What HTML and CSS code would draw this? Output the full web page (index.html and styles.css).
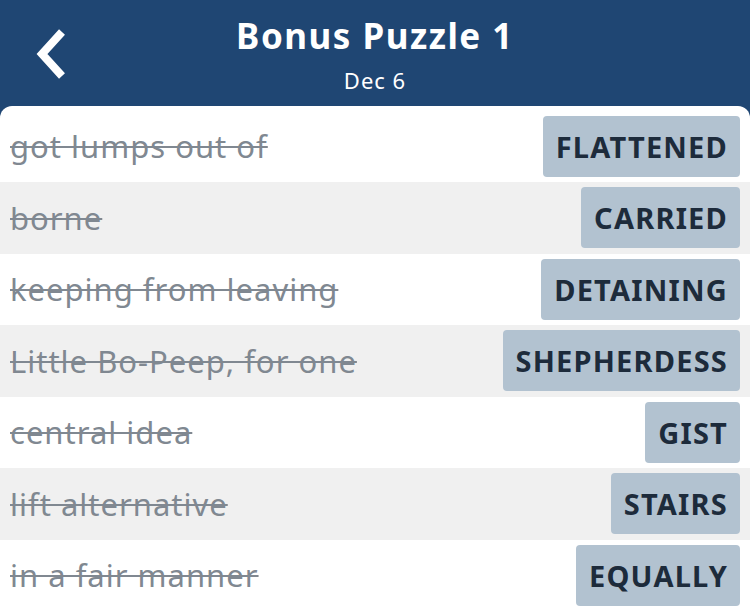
FILE: index.html
```html
<!DOCTYPE html>
<html lang="en">

<head>
    <meta charset="UTF-8">
    <meta name="viewport" content="width=device-width, initial-scale=1.0">
    <title>Bonus Puzzle 1</title>
    <link rel="stylesheet" href="styles.css">
</head>

<body>
    <header class="topbar">
        <a class="back" href="#" aria-label="Back">
            <svg width="40" height="56" viewBox="0 0 40 56">
                <path d="M30 6 L10 28 L30 50" fill="none" stroke="#fff" stroke-width="8" stroke-linecap="butt" stroke-linejoin="miter"/>
            </svg>
        </a>
        <div class="titles">
            <h1>Bonus Puzzle 1</h1>
            <p>Dec 6</p>
        </div>
    </header>

    <main class="card">
        <ul class="clues">
            <li><span class="clue">got lumps out of</span><span class="answer">FLATTENED</span></li>
            <li><span class="clue">borne</span><span class="answer">CARRIED</span></li>
            <li><span class="clue">keeping from leaving</span><span class="answer">DETAINING</span></li>
            <li><span class="clue">Little Bo-Peep, for one</span><span class="answer">SHEPHERDESS</span></li>
            <li><span class="clue">central idea</span><span class="answer">GIST</span></li>
            <li><span class="clue">lift alternative</span><span class="answer">STAIRS</span></li>
            <li><span class="clue">in a fair manner</span><span class="answer">EQUALLY</span></li>
        </ul>
    </main>
</body>

</html>
```

FILE: styles.css
```css
body {
  margin: 0;
  background-color: #1f4673;
  font-family: 'Noto Sans', 'Open Sans', sans-serif;
  overflow: hidden;
}
.topbar {
  position: relative;
  height: 106px;
  color: #fff;
}
.back {
  position: absolute;
  left: 32px;
  top: 26px;
  display: block;
}
.titles {
  text-align: center;
  padding-top: 14px;
}
.titles h1 {
  margin: 0;
  font-size: 35px;
  font-weight: 700;
  line-height: 44px;
  letter-spacing: 1.5px;
}
.titles p {
  margin: 9px 0 0;
  font-size: 22px;
  line-height: 26px;
  letter-spacing: 1px;
}
.card {
  background-color: #fff;
  border-radius: 12px 12px 0 0;
  padding-top: 4.5px;
  height: 505px;
  box-sizing: border-box;
}
.clues {
  list-style: none;
  margin: 0;
  padding: 0;
}
.clues li {
  display: flex;
  justify-content: space-between;
  align-items: center;
  height: 71.5px;
  padding: 0 10px;
  box-sizing: border-box;
}
.clues li:nth-child(even) {
  background-color: #f0f0f0;
}
.clue {
  font-size: 31px;
  color: #808891;
  letter-spacing: 1px;
  text-decoration: line-through;
  text-decoration-thickness: 2px;
}
.answer {
  display: flex;
  align-items: center;
  height: 61px;
  padding: 0 12px 0 13px;
  background-color: #b2c2d0;
  border-radius: 4px;
  color: #1d2b3b;
  font-size: 29px;
  font-weight: 700;
  letter-spacing: 1.2px;
}
```
